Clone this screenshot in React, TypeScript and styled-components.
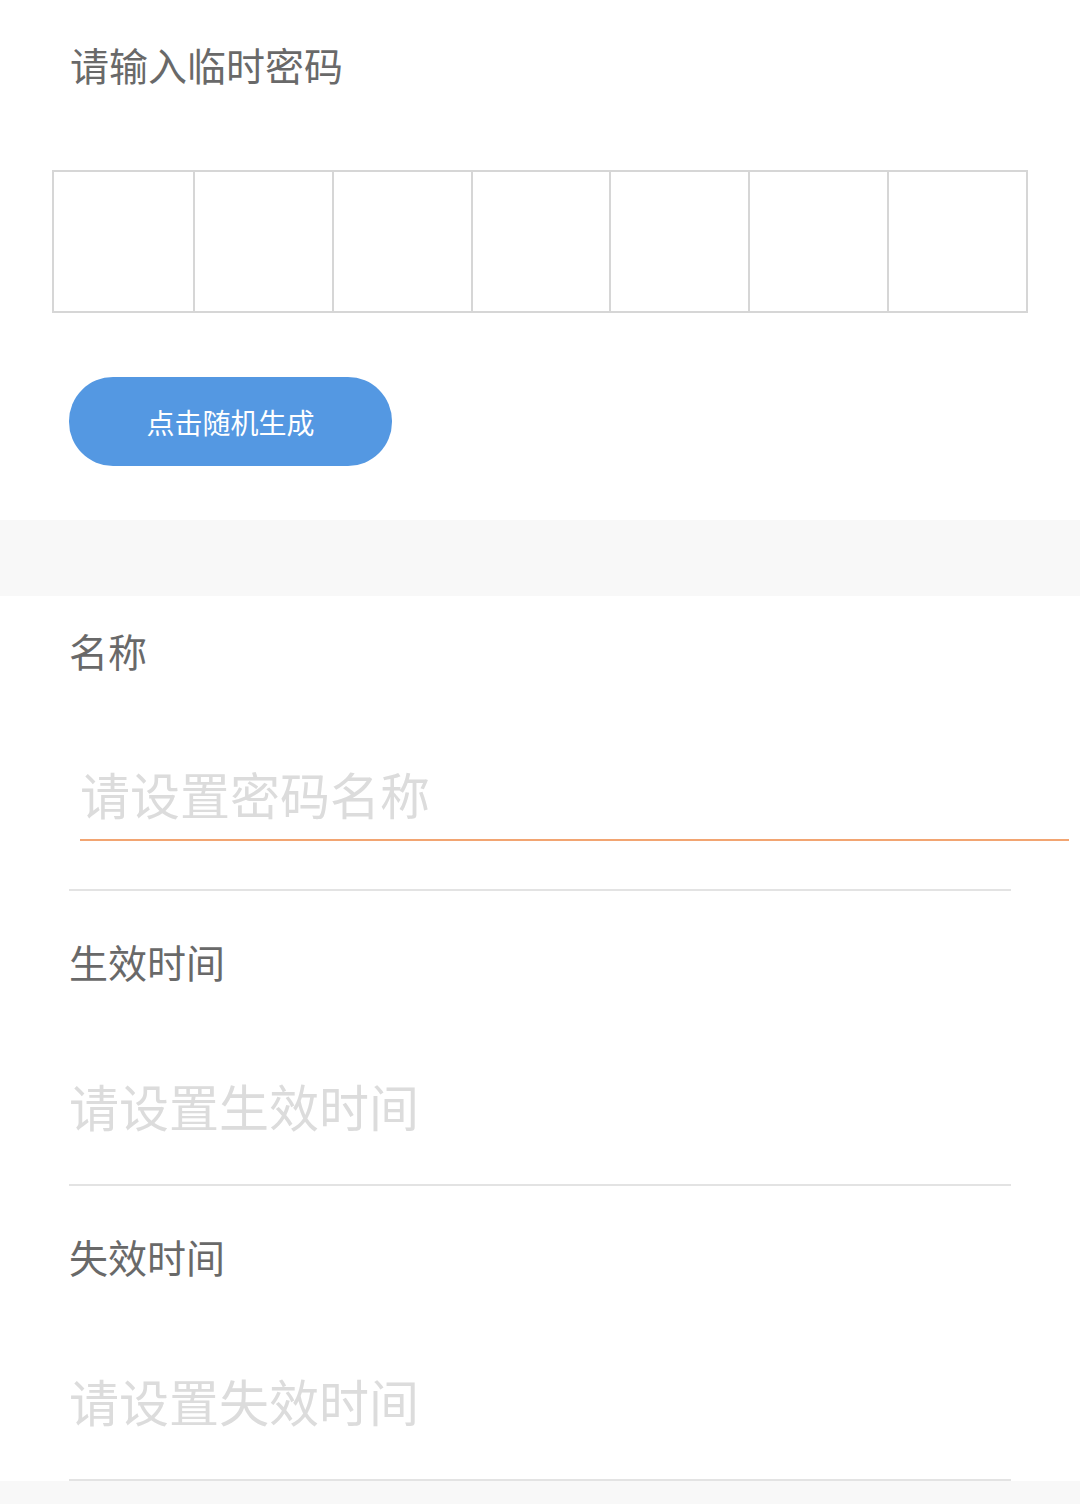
import React from 'react'
import styled, { createGlobalStyle } from 'styled-components'

const GlobalStyle = createGlobalStyle`
  html, body {
    margin: 0;
    padding: 0;
    background-color: #f8f8f8;
    font-family: "Noto Sans CJK SC", "Noto Sans", sans-serif;
  }
  * {
    box-sizing: border-box;
  }
`

const Page = styled.div`
  width: 1080px;
  min-height: 1504px;
  display: flex;
  flex-direction: column;
`

const CodeSection = styled.section`
  background-color: #fff;
  padding: 38px 0 54px;
  display: flex;
  flex-direction: column;
`

const Label = styled.div`
  font-size: 39px;
  line-height: 52px;
  color: #696969;
`

const Title = styled(Label)`
  margin-left: 70px;
`

const CodeGrid = styled.div`
  margin: 80px 52px 0;
  height: 143px;
  display: grid;
  grid-template-columns: repeat(7, 1fr);
  border: 2px solid #d6d6d6;
`

const CodeCell = styled.div`
  border-left: 2px solid #d6d6d6;
  &:first-child {
    border-left: none;
  }
`

const RandomButton = styled.button`
  margin: 64px 0 0 69px;
  width: 323px;
  height: 89px;
  border: none;
  border-radius: 44px;
  background-color: #5498e2;
  color: #fff;
  font-family: inherit;
  font-size: 28px;
  cursor: pointer;
  align-self: flex-start;
`

const Band = styled.div`
  height: 76px;
  background-color: #f8f8f8;
`

const Row = styled.section`
  background-color: #fff;
`

const Field = styled.div<{ $top: number }>`
  margin: 0 69px;
  padding-top: ${p => p.$top}px;
  border-bottom: 2px solid #e3e3e3;
  display: flex;
  flex-direction: column;
`

const NameInput = styled.input`
  margin: 85px 0 48px 11px;
  width: 989px;
  height: 80px;
  padding: 0 0 14px;
  border: none;
  border-bottom: 2px solid #f2a572;
  outline: none;
  background: transparent;
  font-family: inherit;
  font-size: 50px;
  color: #333;
  &::placeholder {
    color: #dcdcdc;
  }
`

const Picker = styled.div`
  margin: 86px 0 47px;
  font-size: 50px;
  line-height: 64px;
  color: #dcdcdc;
  cursor: pointer;
`

const times = [
  { label: '生效时间', placeholder: '请设置生效时间' },
  { label: '失效时间', placeholder: '请设置失效时间' },
]

export default function App () {
  return (
    <Page>
      <GlobalStyle />
      <CodeSection>
        <Title>请输入临时密码</Title>
        <CodeGrid>
          {Array.from({ length: 7 }).map((_, i) => (
            <CodeCell key={i} />
          ))}
        </CodeGrid>
        <RandomButton>点击随机生成</RandomButton>
      </CodeSection>
      <Band />
      <Row>
        <Field $top={28}>
          <Label>名称</Label>
          <NameInput placeholder='请设置密码名称' />
        </Field>
      </Row>
      {times.map(({ label, placeholder }) => (
        <Row key={label}>
          <Field $top={44}>
            <Label>{label}</Label>
            <Picker>{placeholder}</Picker>
          </Field>
        </Row>
      ))}
    </Page>
  )
}
